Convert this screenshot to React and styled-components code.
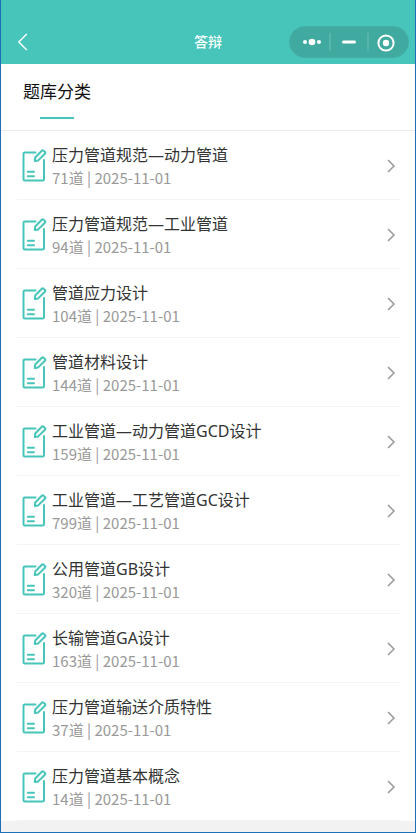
import styled, { createGlobalStyle } from "styled-components";

const GlobalStyle = createGlobalStyle`
  * {
    box-sizing: border-box;
  }
  body {
    margin: 0;
    background-color: #f2f2f2;
    font-family: "Noto Sans CJK SC", "Noto Sans", sans-serif;
  }
  button {
    border: none;
    padding: 0;
    background: none;
    color: inherit;
    font-family: inherit;
    cursor: pointer;
  }
`;

const Page = styled.div`
  min-height: 100vh;
  border: 1px solid #1a6fb5;
  border-top: none;
  background-color: #f2f2f2;
`;
const NavBar = styled.header`
  display: grid;
  grid-template-columns: 1fr auto 1fr;
  align-items: center;
  padding: 26px 6px 6px 16px;
  background-color: #47c5bb;
  color: #ffffff;
`;
const BackButton = styled.button`
  display: flex;
  justify-self: start;
`;
const NavTitle = styled.h1`
  margin: 0;
  /* evens out the side paddings so the title stays centred */
  padding: 0 10px 2px 0;
  font-size: 14px;
  font-weight: 500;
  line-height: 20px;
`;
const Capsule = styled.div`
  display: flex;
  justify-self: end;
  align-items: center;
  width: 120px;
  height: 32px;
  padding: 0 4px;
  border: 1px solid #44aea5;
  border-radius: 16px;
  background-color: #40a9a0;
`;
const CapsuleButton = styled.button`
  display: flex;
  flex: 1;
  height: 18px;
  align-items: center;
  justify-content: center;
  border-left: ${(props) => (props.$divided ? "2px solid #57b5ad" : "none")};
`;

const Tabs = styled.nav`
  display: flex;
  padding: 0 22px;
  background-color: #ffffff;
  border-bottom: 1px solid #ebebef;
`;
const Tab = styled.button`
  display: flex;
  flex-direction: column;
  align-items: center;
  padding: 15px 0 11px;
  row-gap: 14px;
  color: #111111;
  font-size: 17px;
  line-height: 24px;

  &::after {
    content: "";
    width: 34px;
    height: 2px;
    background-color: #47c5bb;
  }
`;

const List = styled.ul`
  margin: 0;
  padding: 0 15px 0 16px;
  list-style: none;
  background-color: #ffffff;
`;
const Item = styled.li`
  border-bottom: 1px solid #f4f4f4;
`;
const ItemLink = styled.a`
  display: flex;
  align-items: center;
  height: 68px;
  padding: 2px 4px 0 5px;
  color: #333333;
  text-decoration: none;
`;
const ItemText = styled.div`
  display: flex;
  flex: 1;
  flex-direction: column;
  padding-left: 5px;
`;
const ItemTitle = styled.span`
  font-family: "Noto Sans", "Noto Sans CJK SC", sans-serif;
  font-size: 16px;
  line-height: 24px;
`;
const ItemMeta = styled.span`
  color: #999999;
  font-size: 15px;
  line-height: 22px;
`;

const categories = [
  { title: "压力管道规范—动力管道", count: 71, date: "2025-11-01" },
  { title: "压力管道规范—工业管道", count: 94, date: "2025-11-01" },
  { title: "管道应力设计", count: 104, date: "2025-11-01" },
  { title: "管道材料设计", count: 144, date: "2025-11-01" },
  { title: "工业管道—动力管道GCD设计", count: 159, date: "2025-11-01" },
  { title: "工业管道—工艺管道GC设计", count: 799, date: "2025-11-01" },
  { title: "公用管道GB设计", count: 320, date: "2025-11-01" },
  { title: "长输管道GA设计", count: 163, date: "2025-11-01" },
  { title: "压力管道输送介质特性", count: 37, date: "2025-11-01" },
  { title: "压力管道基本概念", count: 14, date: "2025-11-01" },
];

const BackIcon = () => (
  <svg width="12" height="18" viewBox="0 0 12 18" fill="none" aria-hidden="true">
    <path d="M9.8 1 1.8 9l8 8" stroke="currentColor" strokeWidth="1.4" />
  </svg>
);

const MoreIcon = () => (
  <svg width="20" height="8" viewBox="0 0 20 8" fill="currentColor" aria-hidden="true">
    <circle cx="3" cy="4" r="2" />
    <circle cx="10" cy="4" r="3.3" />
    <circle cx="17" cy="4" r="2" />
  </svg>
);

const MinusIcon = () => (
  <svg width="14" height="4" viewBox="0 0 14 4" fill="currentColor" aria-hidden="true">
    <rect y="0.5" width="14" height="3" rx="1.5" />
  </svg>
);

const CloseIcon = () => (
  <svg width="18" height="20" viewBox="0 0 18 20" fill="none" aria-hidden="true">
    <circle cx="9" cy="11" r="7.6" stroke="currentColor" strokeWidth="2" />
    <circle cx="9" cy="11" r="3.2" fill="currentColor" />
  </svg>
);

const PaperIcon = () => (
  <svg
    width="25"
    height="34"
    viewBox="0 1 25 34"
    fill="none"
    stroke="#47c5bb"
    strokeWidth="2"
    strokeLinecap="round"
    strokeLinejoin="round"
    aria-hidden="true"
  >
    <path d="M13.5 4.5H2.8Q1.5 4.5 1.5 5.8V31.2Q1.5 32.5 2.8 32.5H20.7Q22 32.5 22 31.2V12" />
    <path d="M12.8 13 13.2 9.5 19.8 2.7Q20.7 1.8 21.6 2.7L22.9 3.9Q23.8 4.800 22.9 5.7L16.2 12.4Z" />
    <path d="M5.8 23.7H12M5.8 28.2H12" />
  </svg>
);

const ArrowIcon = () => (
  <svg width="10" height="14" viewBox="0 0 10 14" fill="none" aria-hidden="true">
    <path d="M2 1l6 6-6 6" stroke="#999999" strokeWidth="1.5" />
  </svg>
);

export default function App() {
  return (
    <Page>
      <GlobalStyle />
      <NavBar>
        <BackButton type="button" aria-label="返回">
          <BackIcon />
        </BackButton>
        <NavTitle>答辩</NavTitle>
        <Capsule>
          <CapsuleButton type="button" aria-label="更多">
            <MoreIcon />
          </CapsuleButton>
          <CapsuleButton type="button" aria-label="最小化" $divided>
            <MinusIcon />
          </CapsuleButton>
          <CapsuleButton type="button" aria-label="关闭" $divided>
            <CloseIcon />
          </CapsuleButton>
        </Capsule>
      </NavBar>
      <Tabs>
        <Tab type="button">题库分类</Tab>
      </Tabs>
      <List>
        {categories.map((item) => (
          <Item key={item.title}>
            <ItemLink href="#">
              <PaperIcon />
              <ItemText>
                <ItemTitle>{item.title}</ItemTitle>
                <ItemMeta>
                  {item.count}道 | {item.date}
                </ItemMeta>
              </ItemText>
              <ArrowIcon />
            </ItemLink>
          </Item>
        ))}
      </List>
    </Page>
  );
}
